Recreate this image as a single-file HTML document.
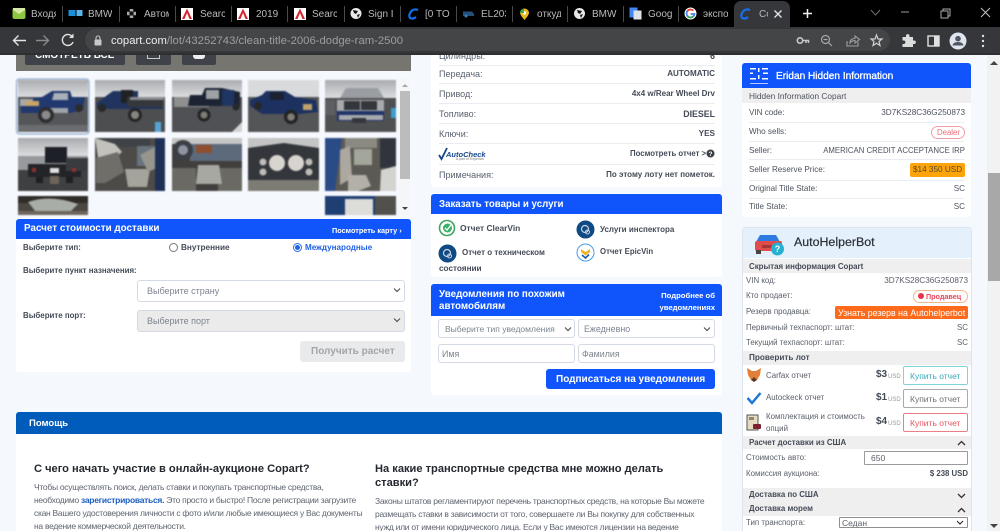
<!DOCTYPE html>
<html lang="ru"><head><meta charset="utf-8"><title>Copart</title>
<style>
html{margin:0;padding:0;width:1000px;height:531px;overflow:hidden;background:#f5f8fd;}
body{margin:0;padding:0;width:1000px;height:531px;overflow:hidden;position:relative;background:#f5f8fd;font-family:"Liberation Sans","Noto Sans CJK SC",sans-serif;color:#3a3f4a;font-size:9px;}
div,span,svg{position:absolute;box-sizing:border-box}
.t{white-space:nowrap;line-height:12px;height:12px}
.b{font-weight:bold}
.g{color:#5a6270}
.d{color:#444b57;font-weight:bold}
.w{background:#fff;border-radius:3px}
.h{background:#0f55fb;color:#fff;font-weight:bold;border-radius:3px 3px 0 0}
.ln{height:1px;background:#e9edf2}
.sel{background:#fff;border:1px solid #d3dae6;border-radius:3px;color:#7d8490}
.tab{color:#b9babc;font-size:10px;white-space:nowrap;overflow:hidden;top:8px;height:13px;line-height:13px}
.sep{width:1px;height:16px;top:6px;background:#4a4a4a}
.r{color:#4c525c;font-size:8.100px}
.g2{color:#595f69;font-size:7.900px}
.bar{left:743px;width:228px;background:#efefef}
.p{color:#5f6570;font-size:8.500px;letter-spacing:-.28px}
.hd{color:#24282f;font-size:11.100px;font-weight:bold;line-height:14px;height:14px}
</style></head><body>

<!-- hero -->
<div style="left:16px;top:50px;width:395px;height:21px;background:#77756f"></div>
<div style="left:25px;top:50px;width:100px;height:15px;background:#3f4349;border-radius:2px"></div>
<div class="t b" style="left:35px;top:50px;color:#fff;font-size:10px">СМОТРЕТЬ ВСЕ</div>
<div style="left:136px;top:50px;width:35px;height:15px;background:#3f4349;border-radius:2px"></div>
<div style="left:147px;top:52px;width:13px;height:7px;border:1px solid #c9cbce;border-top:0"></div>
<div style="left:182px;top:50px;width:34px;height:15px;background:#3f4349;border-radius:2px"></div>
<div style="left:193px;top:52px;width:12px;height:7px;background:#eee;border-radius:0 0 3px 3px"></div>

<!-- thumbnails -->
<svg style="left:0;top:0;filter:blur(.8px)" width="420" height="220" viewBox="0 0 420 220">
<defs>
<linearGradient id="sky" x1="0" y1="0" x2="0" y2="1"><stop offset="0" stop-color="#a9abae"/><stop offset="1" stop-color="#dcdddf"/></linearGradient>
<clipPath id="c10"><rect x="18" y="196" width="70" height="19"/></clipPath>
<clipPath id="c11"><rect x="325" y="196" width="71" height="19"/></clipPath>
</defs>
<!-- 1 -->
<rect x="16.500" y="79" width="72.500" height="55" rx="3" fill="#f5f8fd" stroke="#7f9cc6" stroke-width="1"/>
<rect x="18" y="80" width="70" height="52" fill="#55565a"/><rect x="18" y="80" width="70" height="17" fill="url(#sky)"/>
<path d="M20 100L42 97L52 91H70L72 97H85L83 110L70 113H30L21 113Z" fill="#21396e"/>
<path d="M54 93H68V100H52Z" fill="#aab0b8"/>
<rect x="20" y="99" width="13" height="7" fill="#a8a9ab"/><rect x="26" y="101" width="13" height="5" fill="#caa566"/>
<path d="M44 113H68V108H44Z" fill="#9fa4aa"/>
<circle cx="46" cy="115" r="8" fill="#2d2d2e"/><circle cx="46" cy="115" r="4.500" fill="#8a8b8c"/><circle cx="79" cy="108" r="4" fill="#2b2b2c"/>
<rect x="18" y="125" width="70" height="7" fill="#6b6c6f"/>
<!-- 2 -->
<rect x="95" y="80" width="70" height="52" fill="#4d4e50"/><rect x="95" y="80" width="70" height="17" fill="url(#sky)"/>
<path d="M97 103L106 96L113 91H138V97H163V109H110L97 108Z" fill="#20345f"/>
<rect x="121" y="90" width="12" height="13" fill="#1f2124"/><rect x="127" y="97" width="36" height="10" fill="#34373b"/>
<rect x="130" y="97" width="34" height="3" fill="#8a8d92"/>
<circle cx="135" cy="115" r="7" fill="#252526"/><circle cx="135" cy="115" r="4" fill="#86867f"/><circle cx="102" cy="108" r="4" fill="#28282a"/>
<rect x="155" y="122" width="6" height="10" fill="#57a5d6"/>
<!-- 3 -->
<rect x="172" y="80" width="70" height="52" fill="#505154"/><rect x="172" y="80" width="70" height="17" fill="url(#sky)"/>
<rect x="174" y="97" width="35" height="10" fill="#8f8f8e"/>
<path d="M188 106H240V92L222 88H205L202 95H190Z" fill="#1c2433"/>
<rect x="206" y="90" width="13" height="9" fill="#9fa3a6"/><rect x="222" y="90" width="12" height="16" fill="#1f3563"/>
<circle cx="204" cy="115" r="6.500" fill="#232324"/><circle cx="204" cy="115" r="3.500" fill="#7d7d77"/><circle cx="236" cy="107" r="3.500" fill="#28282a"/>
<path d="M232 132L242 122V132Z" fill="#d3d3d3"/>
<!-- 4 -->
<rect x="248" y="80" width="71" height="52" fill="#545557"/><rect x="248" y="80" width="71" height="17" fill="#d9dadb"/>
<path d="M250 100L262 95L266 91H285L295 97L316 100L318 112L300 114H262L250 106Z" fill="#1d3161"/>
<rect x="270" y="92" width="14" height="8" fill="#1b2230"/><rect x="303" y="104" width="9" height="6" fill="#bda26c"/>
<circle cx="291" cy="117" r="7" fill="#222223"/><circle cx="291" cy="117" r="3.800" fill="#7f7f78"/><circle cx="258" cy="106" r="4" fill="#27272a"/>
<!-- 5 -->
<rect x="325" y="80" width="71" height="52" fill="#4f5052"/><rect x="325" y="80" width="71" height="18" fill="url(#sky)"/>
<path d="M346 88H378L384 98H340Z" fill="#9a9ea3"/>
<rect x="337" y="100" width="47" height="19" fill="#a8aaad"/><rect x="344" y="101" width="16" height="9" fill="#33373c"/><rect x="361" y="101" width="16" height="9" fill="#33373c"/>
<rect x="337" y="111" width="47" height="10" fill="#1f3468"/><rect x="339" y="115" width="44" height="5" fill="#a7a9ac"/><rect x="352" y="118" width="14" height="5" fill="#33363a"/>
<rect x="325" y="100" width="10" height="15" fill="#5d5f63"/><rect x="391" y="108" width="5" height="10" fill="#3e9fca"/>
<!-- 6 -->
<rect x="18" y="138" width="70" height="53" fill="#3f4042"/><rect x="18" y="138" width="70" height="18" fill="url(#sky)"/>
<rect x="18" y="156" width="70" height="14" fill="#97999c"/>
<rect x="45" y="147" width="22" height="16" fill="#1d2028"/>
<path d="M28 164H81V177H28Z" fill="#232427"/><rect x="66" y="158" width="22" height="13" fill="#393b3f"/>
<rect x="50" y="168" width="9" height="5" fill="#dfdfe0"/><rect x="32" y="168" width="4" height="4" fill="#8e2e2e"/><rect x="72" y="168" width="4" height="4" fill="#8e2e2e"/>
<rect x="36" y="177" width="7" height="6" fill="#1f1f20"/><rect x="66" y="177" width="7" height="6" fill="#1f1f20"/><rect x="50" y="176" width="9" height="8" fill="#6e6459"/>
<!-- 7 -->
<rect x="95" y="138" width="70" height="53" fill="#4d4b47"/>
<rect x="95" y="138" width="55" height="9" fill="#3f4247"/>
<path d="M95 138L115 144L122 152L100 170Z" fill="#c2c1bc"/>
<rect x="137" y="146" width="20" height="20" fill="#68737e"/>
<path d="M96 158L118 152L124 172L105 183H96Z" fill="#6f6e69"/>
<path d="M125 169H150L147 187H128Z" fill="#a5a49c"/><path d="M140 155L157 146V168L148 172Z" fill="#96958e"/>
<rect x="155" y="138" width="10" height="53" fill="#1e2f55"/>
<!-- 8 -->
<rect x="172" y="138" width="70" height="53" fill="#403f3d"/>
<rect x="172" y="138" width="70" height="6" fill="#c6c6c6"/>
<rect x="190" y="144" width="52" height="17" fill="#5d6a7c"/>
<rect x="196" y="145" width="16" height="8" fill="#8d4f30"/>
<circle cx="183" cy="150" r="10" fill="#3b3e44"/><circle cx="183" cy="150" r="5" fill="#8e95a0"/>
<rect x="172" y="168" width="24" height="23" fill="#6a6963"/><rect x="218" y="168" width="24" height="23" fill="#6a6963"/>
<path d="M198 165H219L222 184H196Z" fill="#a8a8a2"/>
<!-- 9 -->
<rect x="248" y="138" width="71" height="53" fill="#33363b"/>
<path d="M248 138H319V148L284 143L248 148Z" fill="#c4c4c4"/>
<circle cx="277" cy="163" r="8" fill="#d8d4cf"/><circle cx="296" cy="163" r="8" fill="#d8d4cf"/>
<circle cx="263" cy="162" r="3.500" fill="#c0bcb7"/><circle cx="263" cy="172" r="3.500" fill="#c0bcb7"/><circle cx="309" cy="162" r="3.500" fill="#c0bcb7"/><circle cx="309" cy="172" r="3.500" fill="#c0bcb7"/>
<rect x="248" y="180" width="71" height="11" fill="#7d7c74"/>
<!-- 10 -->
<rect x="325" y="138" width="71" height="53" fill="#5c5a55"/>
<path d="M325 138H342L335 191H325Z" fill="#2b4b87"/>
<rect x="345" y="138" width="32" height="10" fill="#8b8a82"/>
<rect x="354" y="149" width="18" height="16" fill="#a3a69a"/>
<path d="M340 150L350 146L352 178L340 185Z" fill="#aca8a0"/>
<path d="M348 175H366L371 186L358 191H348Z" fill="#b3b0a8"/>
<rect x="380" y="138" width="16" height="30" fill="#30353d"/><path d="M381 170L396 166V191H380Z" fill="#d3d3cf"/>
<!-- row 3 -->
<g clip-path="url(#c10)"><rect x="18" y="196" width="70" height="19" fill="#4b4640"/><path d="M18 196H88V203H18Z" fill="#2f2b27"/><path d="M28 202Q50 194 78 204L70 212H36Z" fill="#a8ada8"/><rect x="18" y="211" width="70" height="4" fill="#6d665d"/></g>
<g clip-path="url(#c11)"><rect x="325" y="196" width="71" height="19" fill="#1f3e72"/><rect x="345" y="199" width="28" height="16" fill="#dcdcd9"/><rect x="375" y="196" width="21" height="19" fill="#52504c"/></g>
</svg>

<!-- thumb scrollbar -->
<div style="left:399px;top:78px;width:11px;height:137px;background:#f5f6f8"></div>
<div style="left:400px;top:91px;width:10px;height:88px;background:#bcbcbc"></div>
<div style="left:402px;top:84px;width:0;height:0;border:3px solid transparent;border-bottom:3px solid #a8a8a8;border-top:0"></div>
<div style="left:402px;top:207px;width:0;height:0;border:3px solid transparent;border-top:3px solid #444;border-bottom:0"></div>

<!-- shipping calc -->
<div class="w" style="left:16px;top:219px;width:395px;height:153px"></div>
<div class="h" style="left:16px;top:219px;width:395px;height:19.500px"></div>
<div class="t b" style="left:24px;top:223px;color:#fff;font-size:9.900px">Расчет стоимости доставки</div>
<div class="t b" style="left:332px;top:225px;color:#fff;font-size:7.300px">Посмотреть карту &#8250;</div>
<div class="t d" style="left:23px;top:242px;font-size:7.900px">Выберите тип:</div>
<div style="left:169px;top:243px;width:9px;height:9px;border:1px solid #777;border-radius:50%;background:#fff"></div>
<div class="t d" style="left:181px;top:242px;font-size:8.200px">Внутренние</div>
<div style="left:293px;top:243px;width:9px;height:9px;border:1px solid #2a6fe8;border-radius:50%;background:#fff"></div>
<div style="left:295px;top:245px;width:5px;height:5px;border-radius:50%;background:#1a66e6"></div>
<div class="t b" style="left:305px;top:242px;color:#2261e6;font-size:8.100px">Международные</div>
<div class="t d" style="left:23px;top:265px;font-size:7.900px">Выберите пункт назначения:</div>
<div class="sel" style="left:137px;top:279.500px;width:268px;height:22px"></div>
<div class="t" style="left:147px;top:285px;color:#7d8490;font-size:9px">Выберите страну</div>
<svg style="left:393px;top:287px" width="8" height="6" viewBox="0 0 8 6"><path d="M1 1.500L4 4.500L7 1.500" fill="none" stroke="#555" stroke-width="1.200"/></svg>
<div class="t d" style="left:23px;top:310px;font-size:7.900px">Выберите порт:</div>
<div class="sel" style="left:137px;top:310px;width:268px;height:22px;background:#ebebeb"></div>
<div class="t" style="left:147px;top:315px;color:#7d8490;font-size:9px">Выберите порт</div>
<svg style="left:393px;top:317px" width="8" height="6" viewBox="0 0 8 6"><path d="M1 1.500L4 4.500L7 1.500" fill="none" stroke="#555" stroke-width="1.200"/></svg>
<div style="left:300px;top:341px;width:105px;height:21px;background:#e9eaeb;border-radius:3px"></div>
<div class="t b" style="left:311px;top:346px;color:#a3a5a8;font-size:10px">Получить расчет</div>

<!-- details -->
<div class="w" style="left:431px;top:55px;width:291px;height:132px"></div>
<div class="t g" style="left:439px;top:50px;font-size:9px">Цилиндры:</div><div class="t d" style="right:285px;top:50px;font-size:9px">6</div>
<div class="ln" style="left:439px;top:65px;width:276px"></div>
<div class="t g" style="left:439px;top:68px;font-size:9px">Передача:</div><div class="t d" style="right:285px;top:68px;font-size:8.100px">AUTOMATIC</div>
<div class="ln" style="left:439px;top:83px;width:276px"></div>
<div class="t g" style="left:439px;top:88px;font-size:9px">Привод:</div><div class="t d" style="right:285px;top:88px;font-size:8px">4x4 w/Rear Wheel Drv</div>
<div class="ln" style="left:439px;top:103px;width:276px"></div>
<div class="t g" style="left:439px;top:108px;font-size:9px">Топливо:</div><div class="t d" style="right:285px;top:108px;font-size:8.800px">DIESEL</div>
<div class="ln" style="left:439px;top:123px;width:276px"></div>
<div class="t g" style="left:439px;top:128px;font-size:9px">Ключи:</div><div class="t d" style="right:285px;top:128px;font-size:8.200px">YES</div>
<div class="ln" style="left:439px;top:143px;width:276px"></div>
<svg style="left:438px;top:147px" width="10" height="14" viewBox="0 0 10 14"><path d="M1 8L3.500 12L9 1" fill="none" stroke="#17468c" stroke-width="1.800"/></svg>
<div class="t b" style="left:446px;top:149px;color:#17468c;font-size:7.500px;font-style:italic">AutoCheck</div>
<div class="t" style="left:456px;top:157px;color:#777;font-size:3.500px;height:5px;line-height:5px">A part of Experian</div>
<div class="t d" style="left:630px;top:148px;font-size:7.800px">Посмотреть отчет &gt;</div>
<svg style="left:706px;top:149px" width="9" height="9" viewBox="0 0 9 9"><circle cx="4.500" cy="4.500" r="4" fill="#3b3f47"/><text x="4.500" y="7" font-size="6.500" font-weight="bold" fill="#fff" text-anchor="middle" font-family="Liberation Sans">?</text></svg>
<div class="ln" style="left:439px;top:164px;width:276px"></div>
<div class="t g" style="left:439px;top:169px;font-size:9px">Примечания:</div><div class="t d" style="right:285px;top:169px;font-size:8px">По этому лоту нет пометок.</div>

<!-- order -->
<div class="w" style="left:431px;top:193px;width:291px;height:84px"></div>
<div class="h" style="left:431px;top:193.500px;width:291px;height:20px"></div>
<div class="t b" style="left:439px;top:199px;color:#fff;font-size:9.700px">Заказать товары и услуги</div>
<svg style="left:438px;top:219px" width="18" height="18" viewBox="0 0 18 18"><circle cx="9" cy="9" r="7.500" fill="#fff" stroke="#3fa45f" stroke-width="1.600"/><circle cx="9.500" cy="9" r="4.500" fill="#38b36a"/><path d="M7 9L9 11L13 6" fill="none" stroke="#fff" stroke-width="1.300"/></svg>
<div class="t d" style="left:460px;top:222px;font-size:8.400px">Отчет ClearVin</div>
<svg style="left:576px;top:220px" width="19" height="19" viewBox="0 0 19 19"><circle cx="9.500" cy="9.500" r="9" fill="#0f4a85"/><circle cx="9" cy="9" r="3.500" fill="none" stroke="#c7d3e0" stroke-width="1.200"/><circle cx="11.500" cy="12" r="2" fill="none" stroke="#c7d3e0"/></svg>
<div class="t d" style="left:600px;top:223.500px;font-size:8px">Услуги инспектора</div>
<svg style="left:438px;top:244px" width="19" height="19" viewBox="0 0 19 19"><circle cx="9.500" cy="9.500" r="9" fill="#0f4a85"/><circle cx="9" cy="9" r="3.500" fill="none" stroke="#c7d3e0" stroke-width="1.200"/><circle cx="11.500" cy="12" r="2" fill="none" stroke="#c7d3e0"/></svg>
<div class="t d" style="left:462px;top:246.500px;font-size:8px">Отчет о техническом</div>
<div class="t d" style="left:439px;top:263px;font-size:8.200px">состоянии</div>
<svg style="left:576px;top:243px" width="19" height="19" viewBox="0 0 19 19"><circle cx="9.500" cy="9.500" r="8.500" fill="#fff" stroke="#4a9fe0" stroke-width="1"/><path d="M5 6L9.500 9L14 6V9L9.500 12.500L5 9Z" fill="#f2b11f"/><path d="M6 12L9.500 15L13 11.500" fill="none" stroke="#1d5aa8" stroke-width="1.600"/></svg>
<div class="t d" style="left:600px;top:246px;font-size:7.800px">Отчет EpicVin</div>

<!-- notifications -->
<div class="w" style="left:431px;top:284px;width:291px;height:111px"></div>
<div class="h" style="left:431px;top:284px;width:291px;height:32px"></div>
<div class="t b" style="left:439px;top:289px;color:#fff;font-size:9.800px">Уведомления по похожим</div>
<div class="t b" style="left:439px;top:301px;color:#fff;font-size:9.800px">автомобилям</div>
<div class="t b" style="right:285px;top:290px;color:#fff;font-size:7.700px">Подробнее об</div>
<div class="t b" style="right:285px;top:302px;color:#fff;font-size:7.700px">уведомлениях</div>
<div class="sel" style="left:438px;top:319px;width:137px;height:19px"></div>
<div class="t" style="left:445px;top:323px;color:#7d8490;font-size:8.500px">Выберите тип уведомления</div>
<svg style="left:564px;top:326px" width="8" height="6" viewBox="0 0 8 6"><path d="M1 1.500L4 4.500L7 1.500" fill="none" stroke="#555" stroke-width="1.200"/></svg>
<div class="sel" style="left:578px;top:319px;width:137px;height:19px"></div>
<div class="t" style="left:584px;top:323px;color:#7d8490;font-size:8.900px">Ежедневно</div>
<svg style="left:703px;top:326px" width="8" height="6" viewBox="0 0 8 6"><path d="M1 1.500L4 4.500L7 1.500" fill="none" stroke="#555" stroke-width="1.200"/></svg>
<div class="sel" style="left:438px;top:344px;width:137px;height:19px"></div>
<div class="t" style="left:442px;top:348px;color:#7d8490;font-size:8.900px">Имя</div>
<div class="sel" style="left:578px;top:344px;width:137px;height:19px"></div>
<div class="t" style="left:582px;top:348px;color:#7d8490;font-size:8.900px">Фамилия</div>
<div style="left:546px;top:369px;width:169px;height:20px;background:#0f55fb;border-radius:3px"></div>
<div class="t b" style="left:556px;top:374px;color:#fff;font-size:10px">Подписаться на уведомления</div>

<!-- help -->
<div class="w" style="left:16px;top:412px;width:706px;height:119px;border-radius:3px 3px 0 0"></div>
<div style="left:16px;top:412px;width:706px;height:22px;background:#005cbb;border-radius:3px 3px 0 0"></div>
<div class="t b" style="left:29px;top:418px;color:#fff;font-size:9.500px">Помощь</div>
<div class="t hd" style="left:34px;top:462px">С чего начать участие в онлайн-аукционе Copart?</div>
<div class="t p" style="left:34px;top:481px">Чтобы осуществлять поиск, делать ставки и покупать транспортные средства,</div>
<div class="t p" style="left:34px;top:494px">необходимо <b style="color:#1c5ec0">зарегистрироваться.</b> Это просто и быстро! После регистрации загрузите</div>
<div class="t p" style="left:34px;top:507px">скан Вашего удостоверения личности с фото и/или любые имеющиеся у Вас документы</div>
<div class="t p" style="left:34px;top:520px">на ведение коммерческой деятельности.</div>
<div class="t hd" style="left:375px;top:462px">На какие транспортные средства мне можно делать</div>
<div class="t hd" style="left:375px;top:476px">ставки?</div>
<div class="t p" style="left:375px;top:495px">Законы штатов регламентируют перечень транспортных средств, на которые Вы можете</div>
<div class="t p" style="left:375px;top:508px">размещать ставки в зависимости от того, совершаете ли Вы покупку для собственных</div>
<div class="t p" style="left:375px;top:521px">нужд или от имени юридического лица. Если у Вас имеются лицензии на ведение</div>

<!-- Eridan -->
<div class="w" style="left:742px;top:63px;width:229px;height:154px"></div>
<div class="h" style="left:742px;top:63px;width:229px;height:25px"></div>
<svg style="left:749px;top:66px" width="20" height="20" viewBox="0 0 20 20" fill="#fff"><rect x="1" y="2" width="6" height="1.500"/><rect x="13" y="2" width="6" height="1.500"/><rect x="1" y="12" width="6" height="1.500"/><rect x="13" y="12" width="6" height="1.500"/><rect x="9" y="2" width="1.500" height="4"/><rect x="9" y="9" width="1.500" height="4"/><rect x="14" y="6.500" width="5" height="1.500"/><rect x="1" y="6.500" width="3" height="1.500"/><rect x="1" y="17" width="18" height="1" opacity=".7"/></svg>
<div class="t" style="left:776px;top:71px;color:#fff;font-size:10.100px;-webkit-text-stroke:.3px #fff">Eridan Hidden Information</div>
<div style="left:742px;top:88px;width:229px;height:15px;background:#efefef"></div>
<div class="t" style="left:749px;top:90px;font-size:8.300px;color:#4c525c">Hidden Information Copart</div>
<div class="t r" style="left:749px;top:107px">VIN code:</div><div class="t" style="right:35px;top:107px;font-size:8.200px;color:#4c525c">3D7KS28C36G250873</div>
<div class="ln" style="left:749px;top:122px;width:215px"></div>
<div class="t r" style="left:749px;top:126px">Who sells:</div>
<div style="left:931px;top:126px;width:34px;height:13px;border:1px solid #f1a0a8;border-radius:7px"></div>
<div class="t" style="left:937px;top:127px;color:#ef6c7a;font-size:7.800px">Dealer</div>
<div class="ln" style="left:749px;top:141px;width:215px"></div>
<div class="t r" style="left:749px;top:145px">Seller:</div><div class="t r" style="right:35px;top:145px;font-size:7.800px">AMERICAN CREDIT ACCEPTANCE IRP</div>
<div class="ln" style="left:749px;top:159px;width:215px"></div>
<div class="t r" style="left:749px;top:164px">Seller Reserve Price:</div>
<div style="left:909.500px;top:163px;width:55px;height:14px;background:#fca40a;border-radius:2px"></div>
<div class="t" style="left:913px;top:164px;color:#5b4a24;font-size:8.200px">$14 350 USD</div>
<div class="ln" style="left:749px;top:180px;width:215px"></div>
<div class="t r" style="left:749px;top:183px">Original Title State:</div><div class="t r" style="right:35px;top:183px">SC</div>
<div class="ln" style="left:749px;top:198px;width:215px"></div>
<div class="t r" style="left:749px;top:201px">Title State:</div><div class="t r" style="right:35px;top:201px">SC</div>

<!-- AutoHelperBot -->
<div style="left:742px;top:227px;width:230px;height:304px;background:#fff;border:1px solid #dbe4ef;border-bottom:0;border-radius:3px 3px 0 0"></div>
<div style="left:743px;top:228px;width:228px;height:30px;background:#e4f0fb"></div>
<svg style="left:753px;top:232px" width="33" height="25" viewBox="0 0 33 25"><path d="M3 10L7 3H23L27 10Z" fill="#2d7be0"/><rect x="2" y="9" width="27" height="10" rx="2" fill="#e04d4a"/><rect x="3" y="18" width="5" height="4" fill="#444"/><rect x="22" y="18" width="5" height="4" fill="#444"/><rect x="9" y="13" width="12" height="3" fill="#a73735"/><circle cx="24.500" cy="17" r="6.500" fill="#25b1cf"/><text x="24.500" y="20" font-size="9" font-weight="bold" fill="#fff" text-anchor="middle" font-family="Liberation Sans">?</text></svg>
<div class="t" style="left:794px;top:235px;color:#2b2f36;font-size:12.400px;line-height:14px;height:14px;-webkit-text-stroke:.2px #2b2f36">AutoHelperBot</div>
<div class="bar" style="top:258.500px;height:14.500px"></div>
<div class="t d" style="left:749px;top:260.500px;font-size:7.900px">Скрытая информация Copart</div>
<div class="t g2" style="left:746px;top:275px">VIN код:</div><div class="t g2" style="right:32px;top:275px;font-size:8.200px">3D7KS28C36G250873</div>
<div class="t g2" style="left:746px;top:290px">Кто продает:</div>
<div style="left:913px;top:290px;width:55px;height:13px;border:1px solid #f2b48a;border-radius:7px"></div>
<div style="left:918px;top:293px;width:6px;height:6px;border-radius:50%;background:#e8344b"></div>
<div class="t b" style="left:926px;top:290.500px;color:#e8445a;font-size:7.200px">Продавец</div>
<div class="t g2" style="left:746px;top:306px">Резерв продавца:</div>
<div style="left:835px;top:306px;width:133px;height:13px;background:#ff6a1a;border-radius:2px"></div>
<div class="t" style="left:838px;top:306.500px;color:#fff;font-size:8.800px">Узнать резерв на Autohelperbot</div>
<div class="t g2" style="left:746px;top:322px">Первичный техпаспорт: штат:</div><div class="t g2" style="right:32px;top:322px">SC</div>
<div class="t g2" style="left:746px;top:337px">Текущий техпаспорт: штат:</div><div class="t g2" style="right:32px;top:337px">SC</div>
<div class="bar" style="top:351px;height:13.500px"></div>
<div class="t d" style="left:749px;top:351.500px;font-size:8.200px">Проверить лот</div>

<svg style="left:746px;top:367px" width="16" height="15" viewBox="0 0 16 15"><path d="M1 1L6 4H10L15 1L14 8L11 13L8 14L5 13L2 8Z" fill="#e2803a"/><path d="M5 13L8 10L11 13L8 15Z" fill="#5b3b24"/></svg>
<div class="t g2" style="left:766px;top:370px">Carfax отчет</div>
<div class="t d" style="left:876px;top:369px;font-size:10px">$3</div><div class="t" style="left:888px;top:371px;color:#999;font-size:6px">USD</div>
<div style="left:903px;top:366px;width:65px;height:19px;border:1px solid #7fd3dd;border-radius:2px"></div>
<div class="t" style="left:910px;top:370px;color:#3ba9bb;font-size:8.500px">Купить отчет</div>

<svg style="left:746px;top:391px" width="16" height="14" viewBox="0 0 16 14"><path d="M1.500 7L6 12L14.500 2" fill="none" stroke="#1c78d8" stroke-width="2.500"/></svg>
<div class="t g2" style="left:766px;top:392px">Autockeck отчет</div>
<div class="t d" style="left:876px;top:392px;font-size:10px">$1</div><div class="t" style="left:888px;top:394px;color:#999;font-size:6px">USD</div>
<div style="left:903px;top:389px;width:65px;height:19px;border:1px solid #a9a9a9;border-radius:2px"></div>
<div class="t" style="left:910px;top:393px;color:#6f6f6f;font-size:8.500px">Купить отчет</div>

<svg style="left:746px;top:414px" width="16" height="17" viewBox="0 0 16 17"><rect x="1" y="1" width="11" height="15" fill="#e7dcc0" stroke="#555" stroke-width="1"/><rect x="3" y="3" width="5" height="3" fill="#887"/><rect x="7" y="10" width="8" height="5" rx="1" fill="#7d2235"/></svg>
<div class="t g2" style="left:766px;top:411px">Комплектация и стоимость</div>
<div class="t g2" style="left:766px;top:423px">опций</div>
<div class="t d" style="left:876px;top:416px;font-size:10px">$4</div><div class="t" style="left:888px;top:418px;color:#999;font-size:6px">USD</div>
<div style="left:903px;top:413px;width:65px;height:19px;border:1px solid #ef7d88;border-radius:2px"></div>
<div class="t" style="left:910px;top:417px;color:#e5545f;font-size:8.500px">Купить отчет</div>

<div class="bar" style="top:436px;height:13px"></div>
<div class="t d" style="left:749px;top:436.500px;font-size:7.900px">Расчет доставки из США</div>
<svg style="left:957px;top:440px" width="9" height="6" viewBox="0 0 9 6"><path d="M1 5L4.500 1.500L8 5" fill="none" stroke="#333" stroke-width="1.300"/></svg>
<div class="t g2" style="left:746px;top:452px">Стоимость авто:</div>
<div style="left:864px;top:451px;width:104px;height:14px;border:1px solid #9a9a9a;border-radius:1px;background:#fff"></div>
<div class="t g2" style="left:871px;top:452px;font-size:8.500px">650</div>
<div class="t g2" style="left:746px;top:468px">Комиссия аукциона:</div>
<div class="t d" style="right:32px;top:468px;font-size:7.800px">$ 238 USD</div>
<div class="bar" style="top:488px;height:14px"></div>
<div class="t d" style="left:749px;top:488.500px;font-size:7.900px">Доставка по США</div>
<svg style="left:957px;top:493px" width="9" height="6" viewBox="0 0 9 6"><path d="M1 1L4.500 4.500L8 1" fill="none" stroke="#333" stroke-width="1.300"/></svg>
<div class="bar" style="top:502px;height:13.500px"></div>
<div class="t d" style="left:749px;top:502.500px;font-size:7.900px">Доставка морем</div>
<svg style="left:957px;top:507px" width="9" height="6" viewBox="0 0 9 6"><path d="M1 5L4.500 1.500L8 5" fill="none" stroke="#333" stroke-width="1.300"/></svg>
<div class="t g2" style="left:746px;top:517px">Тип транспорта:</div>
<div style="left:839px;top:517px;width:129px;height:11px;border:1px solid #8e8e8e;border-radius:1px;background:#fff"></div>
<div class="t g2" style="left:842px;top:516.500px;font-size:8.500px">Седан</div>
<svg style="left:956px;top:520px" width="8" height="6" viewBox="0 0 8 6"><path d="M1 1L4 4L7 1" fill="none" stroke="#333" stroke-width="1.200"/></svg>

<!-- page scrollbar -->
<div style="left:987px;top:55px;width:13px;height:476px;background:#f1f2f4"></div>
<div style="left:988px;top:173px;width:12px;height:108px;background:#a8a8a8"></div>
<div style="left:990px;top:61px;width:0;height:0;border:4px solid transparent;border-bottom:4px solid #444;border-top:0"></div>
<div style="left:990px;top:524px;width:0;height:0;border:4px solid transparent;border-top:4px solid #444;border-bottom:0"></div>

<!-- browser chrome -->
<div style="left:0;top:0;width:1000px;height:27px;background:#000"></div>
<div style="left:0;top:27px;width:1000px;height:26px;background:#36373a"></div>
<div style="left:0;top:53px;width:1000px;height:2px;background:#2e2f31"></div>
<div style="left:734px;top:1px;width:56px;height:26px;background:#36373a;border-radius:7px 7px 0 0"></div>
<div style="left:85px;top:29px;width:805px;height:22px;background:#444547;border-radius:11px"></div>

<div class="sep" style="left:62px"></div><div class="sep" style="left:119px"></div><div class="sep" style="left:175px"></div><div class="sep" style="left:231px"></div><div class="sep" style="left:287px"></div><div class="sep" style="left:344px"></div><div class="sep" style="left:400px"></div><div class="sep" style="left:456px"></div><div class="sep" style="left:512px"></div><div class="sep" style="left:567px"></div><div class="sep" style="left:623px"></div><div class="sep" style="left:678px"></div>

<svg style="left:0;top:0" width="800" height="27" viewBox="0 0 800 27">
<rect x="12.500" y="8" width="13" height="11" rx="2" fill="#8dc63f"/><path d="M13 10L19 14L25 10V8H13Z" fill="#d8e8a8"/>
<rect x="68.500" y="10" width="7" height="6" fill="#1c8fdc"/><rect x="76.500" y="10" width="6" height="6" fill="#5ab5ea"/>
<path d="M127 13.500H136M131.500 9V18" stroke="#aaa" stroke-width="3.500"/><rect x="129.500" y="11.500" width="4" height="4" fill="#111"/>
<g><rect x="181" y="8" width="12" height="12" fill="#fff"/><path d="M182 19L187 8.500L192 19H189.500L187 13L184.500 19Z" fill="#d9232e"/></g>
<g><rect x="237" y="8" width="12" height="12" fill="#fff"/><path d="M238 19L243 8.500L248 19H245.500L243 13L240.500 19Z" fill="#d9232e"/></g>
<g><rect x="294" y="8" width="12" height="12" fill="#fff"/><path d="M295 19L300 8.500L305 19H302.500L300 13L297.500 19Z" fill="#d9232e"/></g>
<circle cx="356" cy="13.500" r="5.500" fill="#e8e8e8"/><path d="M353 10L358 11L356 14L354 13ZM357 15L360 14L358 18Z" fill="#111"/>
<path d="M418 10Q414 8.500 411.500 11Q408 15 410 18Q413 19.500 416 17" fill="none" stroke="#1371f0" stroke-width="2.200"/>
<path d="M463 11.500H472L474 14V16H463Z" fill="#234f7c"/><circle cx="466" cy="16" r="1.500" fill="#3b7fb8"/>
<path d="M524.500 8.500A4.500 4.500 0 0 1 529 13Q529 15 524.500 20Q520 15 520 13A4.500 4.500 0 0 1 524.500 8.500Z" fill="#e8b71c"/><circle cx="524.500" cy="13" r="1.700" fill="#fff"/><path d="M520 13A4.500 4.500 0 0 1 524 8.500L524 13Z" fill="#3fa758"/>
<circle cx="579.500" cy="13.500" r="5.500" fill="#e8e8e8"/><path d="M577 10L582 11L580 14L578 13ZM580 15L583 14L581 18Z" fill="#111"/>
<rect x="629.500" y="7.500" width="8" height="10" fill="#4285f4"/><rect x="633.500" y="10.500" width="8" height="9" fill="#dfe4ea"/>
<circle cx="690.500" cy="13.500" r="6" fill="#fff"/><path d="M690.500 9.500A4 4 0 1 0 694.500 14H690.700" fill="none" stroke="#4285f4" stroke-width="1.800"/><path d="M687.300 11A4 4 0 0 1 693.300 10.700" fill="none" stroke="#ea4335" stroke-width="1.800"/><path d="M687.200 16A4 4 0 0 0 692.800 16.700" fill="none" stroke="#34a853" stroke-width="1.800"/>
<path d="M750 10Q746 8.500 743.500 11Q740 15 742 18Q745 19.500 748 17" fill="none" stroke="#1371f0" stroke-width="2.200"/>
</svg>

<div class="tab" style="left:31px;width:25px">Входящие</div>
<div class="tab" style="left:88px;width:24px">BMW</div>
<div class="tab" style="left:144px;width:25px">Автомобили</div>
<div class="tab" style="left:200px;width:25px">Search</div>
<div class="tab" style="left:256px;width:25px">2019 Toyota</div>
<div class="tab" style="left:312px;width:25px">Search</div>
<div class="tab" style="left:368px;width:26px">Sign In</div>
<div class="tab" style="left:425px;width:25px">[0 TO</div>
<div class="tab" style="left:481px;width:25px">EL2038</div>
<div class="tab" style="left:537px;width:24px">откуда</div>
<div class="tab" style="left:592px;width:25px">BMW</div>
<div class="tab" style="left:648px;width:24px">Google</div>
<div class="tab" style="left:703px;width:25px">экспорт</div>
<div class="tab" style="left:759px;width:9px">Copart</div>
<svg style="left:772px;top:8px" width="12" height="12" viewBox="0 0 12 12"><path d="M2.500 2.500L9.500 9.500M9.500 2.500L2.500 9.500" stroke="#e6e6e6" stroke-width="1.300"/></svg>
<svg style="left:801px;top:7px" width="13" height="13" viewBox="0 0 13 13"><path d="M6.500 2V11M2 6.500H11" stroke="#f2f2f2" stroke-width="1.500"/></svg>
<svg style="left:870px;top:5px" width="130" height="18" viewBox="0 0 130 18"><path d="M1 5L5.500 10L10 5" fill="none" stroke="#6e6e6e" stroke-width="1"/><path d="M31 7H39" stroke="#999" stroke-width="1"/><rect x="73" y="4" width="7" height="7" fill="none" stroke="#aaa"/><rect x="71" y="6" width="7" height="7" fill="#000" stroke="#aaa"/><path d="M111 3L120 12M120 3L111 12" stroke="#c4c4c4" stroke-width="1"/></svg>

<!-- toolbar -->
<svg style="left:8px;top:30px" width="70" height="20" viewBox="0 0 70 20"><path d="M18 10.500H6M10.500 5.500L5.500 10.500L10.500 15.500" fill="none" stroke="#e4e4e4" stroke-width="1.400"/><path d="M28 10.500H40M35.500 5.500L40.500 10.500L35.500 15.500" fill="none" stroke="#8a8a8a" stroke-width="1.400"/><path d="M64.500 7A5.500 5.500 0 1 0 65 12" fill="none" stroke="#e4e4e4" stroke-width="1.400"/><path d="M65.500 3.500V8H61Z" fill="#e4e4e4"/></svg>
<svg style="left:93px;top:35px" width="10" height="11" viewBox="0 0 10 11"><rect x="1.500" y="4.500" width="7" height="6" rx="1" fill="#c8c8c8"/><path d="M3 5V3A2 2 0 0 1 7 3V5" fill="none" stroke="#c8c8c8" stroke-width="1.100"/></svg>
<div class="t" style="left:111px;top:34px;color:#9d9ea1;font-size:11.300px;line-height:14px;height:14px"><span style="position:static;color:#eceded">copart.com</span>/lot/43252743/clean-title-2006-dodge-ram-2500</div>
<svg style="left:790px;top:31px" width="100" height="19" viewBox="0 0 100 19"><circle cx="10" cy="9.500" r="2.700" fill="none" stroke="#c8c8c8" stroke-width="1.600"/><path d="M12.500 9.500H18.500V12M16 9.500V12" fill="none" stroke="#c8c8c8" stroke-width="1.500"/><circle cx="35.500" cy="8.500" r="4" fill="none" stroke="#a8a8a8" stroke-width="1.200"/><path d="M38.500 11.500L42 15M33.500 8.500H37.500" stroke="#a8a8a8" stroke-width="1.200"/><path d="M57 10V15H68V11" fill="none" stroke="#a0a0a0" stroke-width="1.100"/><path d="M60 12Q60 7.500 65 7.500V5L69.500 8.500L65 12V9.500Q62 9.500 60 12Z" fill="none" stroke="#a0a0a0" stroke-width="1.100"/><path d="M86.500 4L88 8H92L89 10.500L90 14.500L86.500 12.200L83 14.500L84 10.500L81 8H85Z" fill="none" stroke="#d0d0d0" stroke-width="1.200"/></svg>
<svg style="left:900px;top:31px" width="94" height="20" viewBox="0 0 94 20"><path d="M2.500 6H6V4.500A1.800 1.800 0 0 1 9.500 4.500V6H13V9.500H14.500A1.800 1.800 0 0 1 14.500 13H13V16H2.500V13H4A1.800 1.800 0 0 0 4 9.500H2.500Z" fill="#dcdcdc"/><rect x="28" y="5" width="11" height="10" fill="none" stroke="#e0e0e0" stroke-width="1.400"/><rect x="34" y="5" width="5" height="10" fill="#e0e0e0"/><circle cx="58" cy="10" r="8.500" fill="#dfe4ee"/><circle cx="58" cy="7.700" r="2.800" fill="#505762"/><path d="M52.500 14.500Q53 11 58 11Q63 11 63.500 14.500Z" fill="#505762"/><circle cx="83" cy="5" r="1.200" fill="#e0e0e0"/><circle cx="83" cy="10" r="1.200" fill="#e0e0e0"/><circle cx="83" cy="15" r="1.200" fill="#e0e0e0"/></svg>
</body></html>
